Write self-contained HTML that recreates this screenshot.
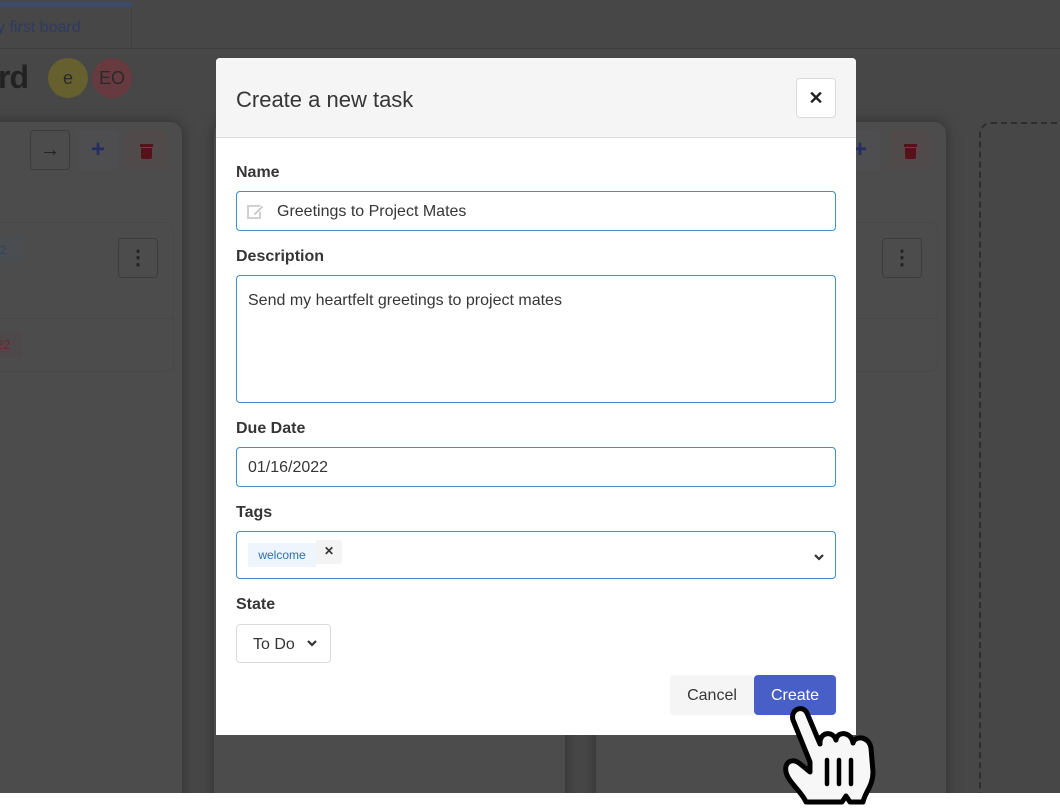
<!DOCTYPE html>
<html><head><meta charset="utf-8"><style>
*{box-sizing:border-box;margin:0;padding:0}
body{width:1060px;height:808px;overflow:hidden;background:#fff;font-family:"Liberation Sans",sans-serif;position:relative}
.bg{position:absolute;left:0;top:0;width:1060px;height:793px;background:#474747;overflow:hidden}
.abs{position:absolute}
.col{position:absolute;top:122px;height:700px;background:#4c4c4c;border-radius:12px;box-shadow:0 0 14px rgba(0,0,0,.35)}
.btn{position:absolute;width:40px;height:40px;border-radius:4px}
.card{position:absolute;border:1px solid #484848;border-radius:8px}
.modal{position:absolute;left:216px;top:58px;width:640px;height:677px;background:#fff;border-radius:4px 4px 0 0;overflow:hidden}
.mh{height:80px;background:#f5f5f5;border-bottom:1px solid #dbdbdb;position:relative}
.mh h1{position:absolute;left:20px;top:29px;font-size:22px;font-weight:normal;color:#363636}
.x{position:absolute;left:580px;top:20px;width:40px;height:40px;border:1px solid #dbdbdb;border-radius:4px;background:#fff;text-align:center;line-height:38px;font-size:18px;font-weight:bold;color:#222}
label{position:absolute;left:20px;font-size:16px;font-weight:bold;color:#363636}
.in{position:absolute;left:20px;width:600px;border:1px solid #3e8ed0;border-radius:4px;background:#fff;font-size:16px;color:#363636}
</style></head><body>
<div class="bg">
  <div class="abs" style="left:0;top:2px;width:132px;height:5px;background:#3d4a6a"></div>
  <div class="abs" style="left:0;top:7px;width:132px;height:42px;border-right:1px solid #3e3e3e"></div>
  <div class="abs" style="left:0;top:48px;width:1060px;height:1px;background:#3e3e3e"></div>
  <div class="abs" style="left:-3px;top:19px;font-size:16px;color:#2f3a60;white-space:nowrap">y first board</div>
  <div class="abs" style="left:-2px;top:59px;font-size:32px;font-weight:bold;color:#222;letter-spacing:-1px">rd</div>
  <div class="abs" style="left:48px;top:58px;width:40px;height:40px;border-radius:50%;background:#66602f;color:#2a2a2a;text-align:center;line-height:40px;font-size:18px">e</div>
  <div class="abs" style="left:92px;top:58px;width:40px;height:40px;border-radius:50%;background:#673a40;color:#2a2a2a;text-align:center;line-height:40px;font-size:18px">EO</div>

  <div class="col" style="left:-170px;width:352px"></div>
  <div class="btn" style="left:30px;top:130px;border:1px solid #3b3b3b;color:#1f1f1f;text-align:center;line-height:38px;font-size:20px;font-weight:bold">&#8594;</div>
  <div class="btn" style="left:78px;top:130px;background:#4e4e51;color:#232d62;text-align:center;line-height:40px;font-size:24px;font-weight:bold">+</div>
  <div class="btn" style="left:126px;top:130px;background:#504a4a"><div style="position:absolute;left:14px;top:14px;width:13px;height:3px;background:#55121a"></div><div style="position:absolute;left:15px;top:18px;width:11px;height:11px;background:#55121a;border-radius:0 0 2px 2px"></div></div>
  <div class="card" style="left:-20px;top:222px;width:194px;height:150px"></div>
  <div class="abs" style="left:-10px;top:318px;width:184px;height:1px;background:#474747"></div>
  <div class="abs" style="left:-4px;top:238px;width:28px;height:24px;background:#4b4e51;color:#2b4360;font-size:12px;line-height:24px">-2</div>
  <div class="abs" style="left:-4px;top:332px;width:26px;height:26px;background:#4d494a;color:#622a30;font-size:13px;line-height:26px">22</div>
  <div class="btn" style="left:118px;top:238px;border:1px solid #3b3b3b;color:#222;text-align:center;line-height:38px;font-size:20px;font-weight:bold">&#8942;</div>

  <div class="col" style="left:214px;width:351px"></div>
  <div class="col" style="left:596px;width:350px"></div>
  <div class="btn" style="left:840px;top:130px;background:#4e4e51;color:#232d62;text-align:center;line-height:40px;font-size:24px;font-weight:bold">+</div>
  <div class="btn" style="left:890px;top:130px;background:#504a4a"><div style="position:absolute;left:14px;top:14px;width:13px;height:3px;background:#55121a"></div><div style="position:absolute;left:15px;top:18px;width:11px;height:11px;background:#55121a;border-radius:0 0 2px 2px"></div></div>
  <div class="card" style="left:700px;top:222px;width:238px;height:150px"></div>
  <div class="abs" style="left:700px;top:318px;width:238px;height:1px;background:#474747"></div>
  <div class="btn" style="left:882px;top:238px;border:1px solid #3b3b3b;color:#222;text-align:center;line-height:38px;font-size:20px;font-weight:bold">&#8942;</div>
  <div class="abs" style="left:979px;top:122px;width:120px;height:700px;border:2px dashed #2e2e2e;border-radius:12px"></div>
</div>

<div class="modal">
  <div class="mh"><h1>Create a new task</h1><div class="x">&#x2715;</div></div>
  <label style="top:106px">Name</label>
  <div class="in" style="top:133px;height:40px;padding:11px 0 0 40px">Greetings to Project Mates
    <svg style="position:absolute;left:10px;top:11px" width="18" height="16" viewBox="0 0 18 16"><rect x="1" y="3" width="12" height="12" fill="none" stroke="#d0d0d0" stroke-width="2"/><path d="M7 10 L15 2 L17 4 L9 12 L6 13 Z" fill="#c8c8c8" stroke="#fff" stroke-width="1"/></svg></div>
  <label style="top:190px">Description</label>
  <div class="in" style="top:217px;height:128px;padding:16px 11px">Send my heartfelt greetings to project mates</div>
  <label style="top:362px">Due Date</label>
  <div class="in" style="top:389px;height:40px;padding:11px 11px">01/16/2022</div>
  <label style="top:446px">Tags</label>
  <div class="in" style="top:473px;height:48px">
    <div style="position:absolute;left:11px;top:11px;width:68px;height:24px;background:#eef5fc;color:#2d6fb0;font-size:12px;line-height:24px;text-align:center">welcome</div>
    <div style="position:absolute;left:79px;top:8px;width:26px;height:24px;background:#f3f3f3;border-radius:0 3px 3px 0;font-size:12px;font-weight:bold;text-align:center;line-height:22px;color:#333">&#x2715;</div>
    <svg style="position:absolute;left:577px;top:22px" width="10" height="7" viewBox="0 0 10 7"><path d="M1 1 L5 5 L9 1" fill="none" stroke="#333" stroke-width="2.2"/></svg>
  </div>
  <label style="top:538px">State</label>
  <div class="in" style="top:566px;width:95px;height:39px;border-color:#dbdbdb;padding:11px 0 0 16px">To Do
    <svg style="position:absolute;left:70px;top:15px" width="10" height="7" viewBox="0 0 10 7"><path d="M1 1 L5 5 L9 1" fill="none" stroke="#333" stroke-width="2.2"/></svg></div>
  <div class="abs" style="left:454px;top:617px;width:84px;height:40px;background:#f5f5f5;border-radius:4px 0 0 4px;font-size:16px;color:#363636;text-align:center;line-height:42px">Cancel</div>
  <div class="abs" style="left:538px;top:617px;width:82px;height:40px;background:#485fc7;border-radius:4px;font-size:16px;color:#fff;text-align:center;line-height:42px">Create</div>
</div>

<svg class="abs" style="left:780px;top:700px" width="100" height="108" viewBox="0 0 100 108">
<path d="M30 62 L13 20 C10 10 22 4 27 13 L40 44 C39 32 53 30 56 40 C57 31 71 31 73 43 C75 35 89 36 91 48 L93 72 C93 86 85 92 83 102 L70 102 L66 96 L62 102 L26 102 C22 92 8 82 6 72 C4 62 12 58 19 63 L30 72 Z" fill="#f7f7f7" stroke="#000" stroke-width="5" stroke-linejoin="round"/>
<path d="M47 60 L47 84 M59 60 L59 84 M71 60 L71 84" stroke="#000" stroke-width="4.5" stroke-linecap="round"/>
</svg>
</body></html>
